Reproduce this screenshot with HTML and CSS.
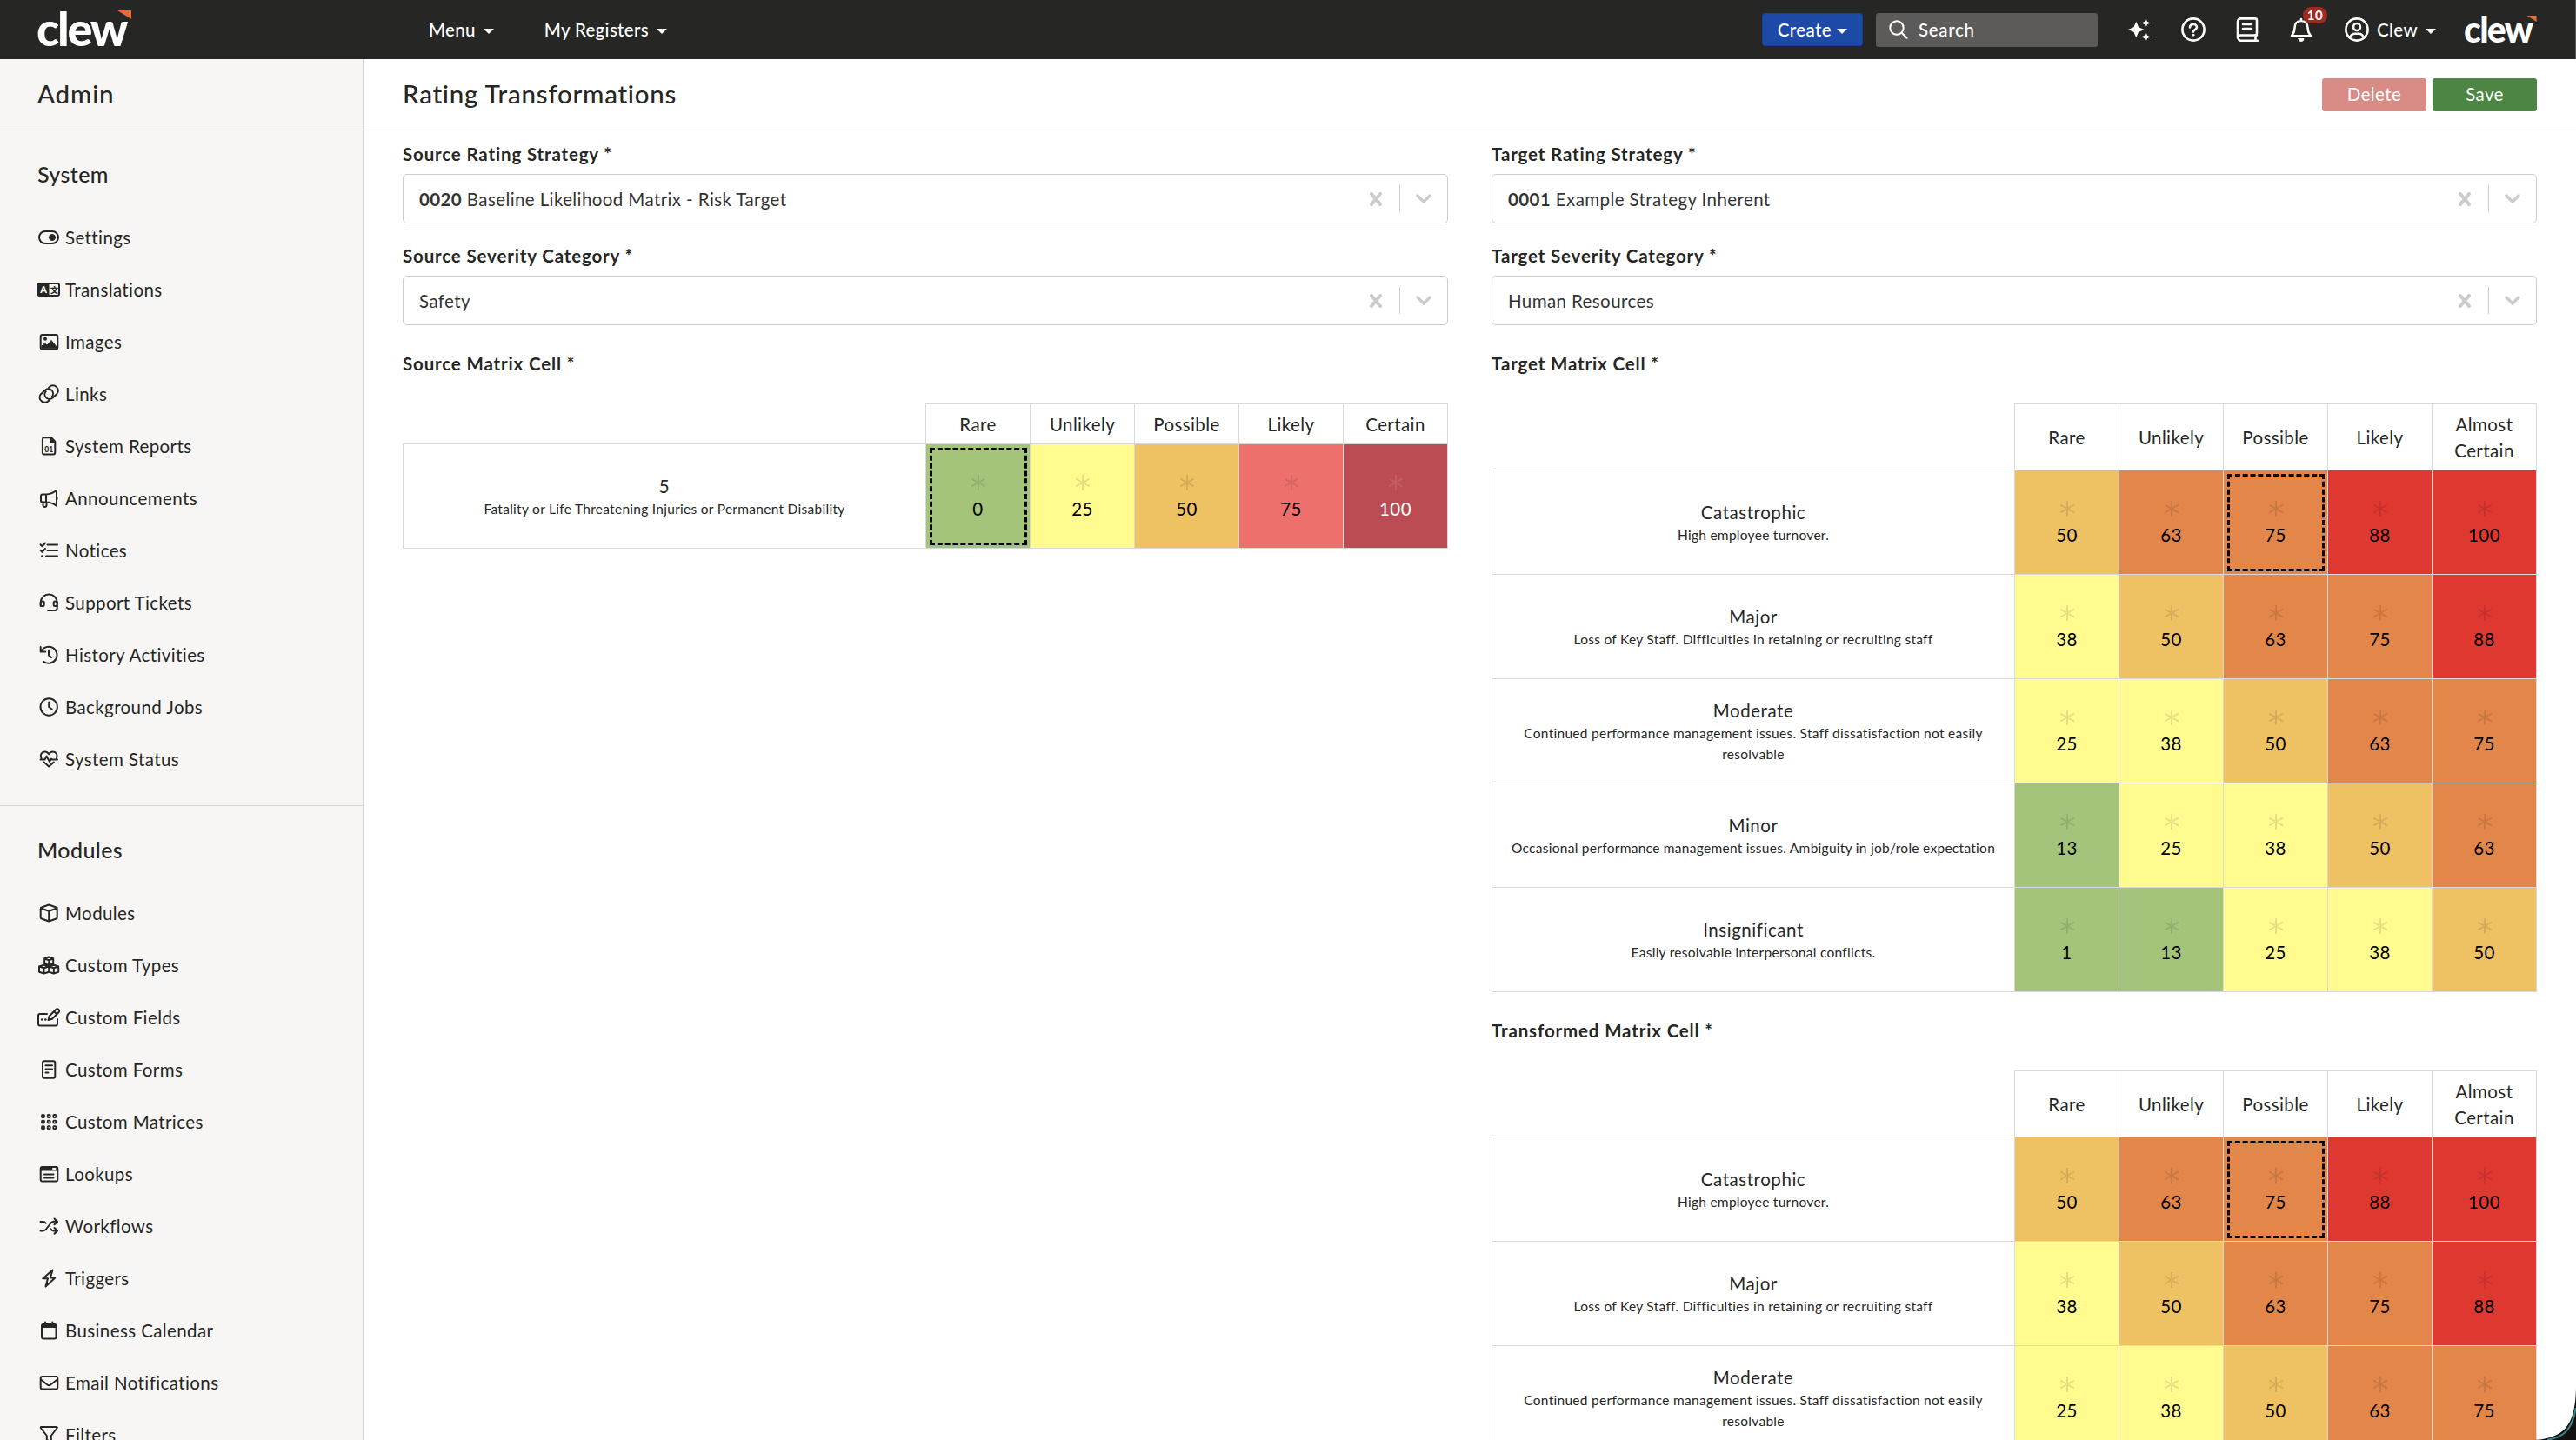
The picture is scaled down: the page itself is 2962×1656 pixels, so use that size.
FILE: index.html
```html
<!DOCTYPE html>
<html lang="en">
<head>
  <meta charset="UTF-8">
  <meta name="viewport" content="width=device-width, initial-scale=1.0">
  <title>Rating Transformations</title>
  <link rel="stylesheet" href="styles.css">
</head>
<body>
  <!-- Shared symbols -->
  <svg class="symbols">
    <symbol id="star" viewBox="0 0 18 18"><path d="M9 1v16M2 5l14 8M16 5L2 13"/></symbol>
    <symbol id="clear" viewBox="0 0 16 16"><path d="M3 2l10 12M13 2L3 14"/></symbol>
    <symbol id="chevron" viewBox="0 0 18 11"><path d="M2 2l7 7 7-7"/></symbol>
  </svg>

  <header class="topbar">
    <div class="logo">clew<svg class="logo-flag" viewBox="0 0 16 10"><path d="M0 0h16v10z"/></svg></div>
    <nav class="topnav">
      <a class="nav-link">Menu<i class="caret"></i></a>
      <a class="nav-link">My Registers<i class="caret"></i></a>
    </nav>
    <div class="tools">
      <button class="create">Create<i class="caret"></i></button>
      <div class="search">
        <svg viewBox="0 0 22 22"><circle cx="9" cy="9" r="7.7"/><path d="M14.7 14.7l6 6"/></svg>
        <span>Search</span>
      </div>
      <svg class="tool sparkles" viewBox="0 0 30 30"><path d="M11 5l3 7 7 3-7 3-3 7-3-7-7-3 7-3zM23 1l1.7 4.3L29 7l-4.3 1.7L23 13l-1.7-4.3L17 7l4.3-1.7zM23 18l1.7 4.3L29 24l-4.3 1.7L23 30l-1.7-4.3L17 24l4.3-1.7z"/></svg>
      <svg class="tool help" viewBox="0 0 28 28"><circle cx="14" cy="14" r="12.6"/><path d="M10 11.5c0-2 1.5-3.5 3.5-3.5h1c2 0 3.500 1.400 3.500 3.300 0 2.600-4 2.900-4 5.200"/><circle class="solid" cx="14" cy="20.2" r="1"/></svg>
      <svg class="tool book" viewBox="0 0 26 28"><path d="M24 20.500H5a3.200 3.200 0 0 0 0 6.200h20M22.500 21v5M2 23.500V5a3.600 3.600 0 0 1 3.600-3.600H22a2 2 0 0 1 2 2v15a2 2 0 0 1-2 2M8 8h10M8 13h10"/></svg>
      <div class="bell">
        <svg class="tool" viewBox="0 0 26 28"><path d="M13 2v2M13 4c-5 0-7.500 3.500-7.500 8 0 5-1.500 6.500-3.500 9.300h22c-2-2.800-3.500-4.300-3.500-9.300 0-4.500-2.500-8-7.500-8z"/><path class="solid" d="M10 24.500h6a3 3 0 0 1-6 0z"/></svg>
        <span class="badge">10</span>
      </div>
      <a class="user">
        <svg class="tool" viewBox="0 0 28 28"><circle cx="14" cy="14" r="12.6"/><circle cx="14" cy="11" r="4"/><path d="M6 23.500c1-3.500 3-4.700 6-4.700h4c3 0 5 1.200 6 4.700"/></svg>
        Clew<i class="caret"></i>
      </a>
      <div class="logo logo-small">clew<svg class="logo-flag" viewBox="0 0 16 10"><path d="M0 0h16v10z"/></svg></div>
    </div>
  </header>

  <div class="layout">
    <aside class="sidebar">
      <div class="sidebar-title">Admin</div>
      <section class="group">
        <h2>System</h2>
        <a class="item"><svg viewBox="0 0 26 24"><rect x="2" y="5" width="22" height="14" rx="7"/><circle class="solid" cx="17" cy="12" r="3.5"/></svg>Settings</a>
        <a class="item"><svg viewBox="0 0 26 24"><rect x="1" y="5" width="24" height="14" rx="2"/><path class="solid" d="M1 5h12v14H1z"/><text class="cut" x="3.2" y="15.8">A</text><text class="han" x="15" y="15.5">文</text></svg>Translations</a>
        <a class="item"><svg viewBox="0 0 26 24"><rect x="3.7" y="4" width="19.6" height="16.5" rx="2"/><circle class="fill" cx="9" cy="8.7" r="2"/><path class="solid" d="M5 19.500v-2.500l3.500-3 2.500 2 5-5.500 6.500 8v1z"/></svg>Images</a>
        <a class="item"><svg viewBox="0 0 26 24"><path d="M13.500 19.200l-1 1a5.400 5.400 0 0 1-7.800 0 5.400 5.400 0 0 1-1-7.700l5.500-5a5.400 5.400 0 0 1 7.600 7.600"/><path d="M13 5l1-1a5.400 5.400 0 0 1 7.800 0 5.400 5.400 0 0 1 .8 7.700l-5.300 5a5.400 5.400 0 0 1-7.600-7.600"/></svg>Links</a>
        <a class="item"><svg viewBox="0 0 26 24"><path d="M7.500 2.300h8.500l4.300 4.300v13a2 2 0 0 1-2 2H7.900a2 2 0 0 1-2-2V4.300a2 2 0 0 1 1.600-2z"/><path class="fill" d="M15 2v6h6z"/><text class="bits" x="8.3" y="18.5">01</text></svg>System Reports</a>
        <a class="item"><svg viewBox="0 0 26 24"><path d="M10 7.500H6a2 2 0 0 0-2 2v5a2 2 0 0 0 2 2h4zM10 7.500c5 0 8-1.500 12-4.700v18c-4-3-7-4.300-12-4.300M6.500 16.500V20a2 2 0 0 0 4 0v-3.500M22.500 11v2"/></svg>Announcements</a>
        <a class="item"><svg viewBox="0 0 26 24"><path d="M11.500 5.600h11.500M11.500 12h11.500M10 18.600h13M3.500 5.300l2 2L9 3.500M3.500 11.800l2 2L9 10"/><circle class="fill" cx="5.4" cy="18.6" r="1.3"/></svg>Notices</a>
        <a class="item"><svg viewBox="0 0 26 24"><path d="M3.700 16v-4a9.500 9.500 0 0 1 19 0v6.500a2.500 2.500 0 0 1-2.500 2.500H15"/><rect x="3.7" y="10.5" width="4" height="5.5" rx="1.5"/><rect x="18.7" y="10.5" width="4" height="5.5" rx="1.5"/><path class="solid" d="M12 20.500h3v1h-3z"/></svg>Support Tickets</a>
        <a class="item"><svg viewBox="0 0 26 24"><path d="M3.700 3v5.500h5.500M4.500 8A9.500 9.500 0 1 1 7.500 20M13 7.500v5l3 2.500"/></svg>History Activities</a>
        <a class="item"><svg viewBox="0 0 26 24"><circle cx="13.2" cy="12" r="9.7"/><path d="M13.200 6.500V12l3.500 2.500"/></svg>Background Jobs</a>
        <a class="item"><svg viewBox="0 0 26 24"><path d="M4.500 11.500C2.500 7 5 3.500 8.500 3.500c2.200 0 3.700 1.300 4.700 2.800 1-1.500 2.500-2.800 4.700-2.800 3.500 0 6 3.500 4 8M3.500 12.500h5l2-4 3.500 6.500 2-3.500 1 1H23M7.500 15.500l5.700 5 5.700-5"/></svg>System Status</a>
      </section>
      <section class="group">
        <h2>Modules</h2>
        <a class="item"><svg viewBox="0 0 26 24"><path d="M13.200 2.500l8.300 3a1.500 1.500 0 0 1 1.200 1.500v10a1.500 1.500 0 0 1-1.200 1.500l-8.300 3-8.300-3A1.500 1.500 0 0 1 3.700 17V7a1.500 1.500 0 0 1 1.200-1.500zM4 6.500l9.200 3.300 9.200-3.300M13.200 10v11.500"/></svg>Modules</a>
        <a class="item"><svg viewBox="0 0 26 24"><path d="M13.200 2.500l5 1.800v6l-5 1.700-5-1.700v-6zM8.200 4.500l5 1.700 5-1.700M13.200 6.500V12M7.500 11.700l5.700 1.800v6.200l-5.700 1.800L2 19.700v-6.200zM2 13.500l5.500 1.800 5.700-1.800 5.700 1.800 5.300-1.800M7.500 15.500v6M18.900 11.700l5.300 1.800v6.200l-5.300 1.800-5.700-1.800v-6.200zM18.900 15.500v6"/></svg>Custom Types</a>
        <a class="item"><svg viewBox="0 0 26 24"><path d="M11 8H3a2 2 0 0 0-2 2v9.500a2 2 0 0 0 2 2h18a2 2 0 0 0 2-2V14M12.500 15l1.200-4.500 7.500-7.500a2.200 2.200 0 0 1 3.200 3.200l-7.500 7.500zM19 5l3.300 3.300"/><circle class="fill" cx="5.2" cy="14.5" r="1.3"/><circle class="fill" cx="9.3" cy="14.5" r="1.3"/></svg>Custom Fields</a>
        <a class="item"><svg viewBox="0 0 26 24"><rect x="6" y="2.3" width="14.3" height="19.5" rx="2"/><path d="M9.500 7.300h7.500M9.500 11.500h7.500M9.500 15.500h3"/></svg>Custom Forms</a>
        <a class="item"><svg viewBox="0 0 26 24"><g class="dots"><rect x="5" y="4" width="3" height="3" rx=".8"/><rect x="11.7" y="4" width="3" height="3" rx=".8"/><rect x="18.3" y="4" width="3" height="3" rx=".8"/><rect x="5" y="10.6" width="3" height="3" rx=".8"/><rect x="11.7" y="10.6" width="3" height="3" rx=".8"/><rect x="18.3" y="10.6" width="3" height="3" rx=".8"/><rect x="5" y="17.2" width="3" height="3" rx=".8"/><rect x="11.7" y="17.2" width="3" height="3" rx=".8"/><rect x="18.3" y="17.2" width="3" height="3" rx=".8"/></g></svg>Custom Matrices</a>
        <a class="item"><svg viewBox="0 0 26 24"><rect x="3.7" y="4" width="19.6" height="16.5" rx="2"/><path class="solid" d="M4 4.500h19v3.500H4z"/><path d="M8 12.500h10.500M8 16.500h10.500"/><path class="light" d="M18 6h2.500"/></svg>Lookups</a>
        <a class="item"><svg viewBox="0 0 26 24"><path d="M3.500 7h3c1.500 0 2.500.7 3.300 1.800M3.500 17.500h3c1.500 0 2.500-.7 3.500-2l5.500-7c1-1.200 2-1.700 3.500-1.700h4M15 15.200c1.200 1.600 2.200 2.300 4 2.300h4M19.500 3.500l3.500 3.500-3.500 3.300M19.500 14l3.500 3.500-3.500 3.300"/></svg>Workflows</a>
        <a class="item"><svg viewBox="0 0 26 24"><path d="M17.500 2.500L6.300 12.300H12L9.500 21.500 20.300 11.500h-5.500z"/></svg>Triggers</a>
        <a class="item"><svg viewBox="0 0 26 24"><rect x="5" y="5" width="16.5" height="16.5" rx="2"/><path class="solid" d="M5.500 5h15.500v3.500H5.500z"/><path d="M9 2.500V5M17.300 2.500V5"/></svg>Business Calendar</a>
        <a class="item"><svg viewBox="0 0 26 24"><rect x="3.7" y="5" width="19.6" height="14.5" rx="2"/><path d="M4 8.500l7.500 6a3 3 0 0 0 3.600 0l7.700-6"/></svg>Email Notifications</a>
        <a class="item"><svg viewBox="0 0 26 24"><path d="M4 3h18.500l.3 1-7 9v8l-5-3.500V13L3.700 4z"/></svg>Filters</a>
      </section>
    </aside>

    <main class="main">
      <div class="page-head">
        <h1>Rating Transformations</h1>
        <div class="actions">
          <button class="btn btn-delete">Delete</button>
          <button class="btn btn-save">Save</button>
        </div>
      </div>

      <div class="columns">
        <div class="column">
          <label>Source Rating Strategy *</label>
          <div class="select">
            <div class="value"><b>0020</b> Baseline Likelihood Matrix - Risk Target</div>
            <svg class="clear"><use href="#clear"/></svg>
            <svg class="chevron"><use href="#chevron"/></svg>
          </div>
          <label>Source Severity Category *</label>
          <div class="select">
            <div class="value">Safety</div>
            <svg class="clear"><use href="#clear"/></svg>
            <svg class="chevron"><use href="#chevron"/></svg>
          </div>
          <label class="matrix-label">Source Matrix Cell *</label>
          <table class="matrix">
            <tr class="head"><td class="blank"></td><th>Rare</th><th>Unlikely</th><th>Possible</th><th>Likely</th><th>Certain</th></tr>
            <tr>
              <td class="severity">5<small>Fatality or Life Threatening Injuries or Permanent Disability</small></td>
              <td class="green"><div class="cell selected"><svg><use href="#star"/></svg>0</div></td>
              <td class="yellow"><div class="cell"><svg><use href="#star"/></svg>25</div></td>
              <td class="amber"><div class="cell"><svg><use href="#star"/></svg>50</div></td>
              <td class="salmon"><div class="cell"><svg><use href="#star"/></svg>75</div></td>
              <td class="crimson"><div class="cell"><svg><use href="#star"/></svg>100</div></td>
            </tr>
          </table>
        </div>

        <div class="column">
          <label>Target Rating Strategy *</label>
          <div class="select">
            <div class="value"><b>0001</b> Example Strategy Inherent</div>
            <svg class="clear"><use href="#clear"/></svg>
            <svg class="chevron"><use href="#chevron"/></svg>
          </div>
          <label>Target Severity Category *</label>
          <div class="select">
            <div class="value">Human Resources</div>
            <svg class="clear"><use href="#clear"/></svg>
            <svg class="chevron"><use href="#chevron"/></svg>
          </div>
          <label class="matrix-label">Target Matrix Cell *</label>
          <table class="matrix">
            <tr class="head tall"><td class="blank"></td><th>Rare</th><th>Unlikely</th><th>Possible</th><th>Likely</th><th>Almost Certain</th></tr>
            <tr>
              <td class="severity">Catastrophic<small>High employee turnover.</small></td>
              <td class="amber"><div class="cell"><svg><use href="#star"/></svg>50</div></td>
              <td class="orange"><div class="cell"><svg><use href="#star"/></svg>63</div></td>
              <td class="orange"><div class="cell selected"><svg><use href="#star"/></svg>75</div></td>
              <td class="red"><div class="cell"><svg><use href="#star"/></svg>88</div></td>
              <td class="red"><div class="cell"><svg><use href="#star"/></svg>100</div></td>
            </tr>
            <tr>
              <td class="severity">Major<small>Loss of Key Staff. Difficulties in retaining or recruiting staff</small></td>
              <td class="yellow"><div class="cell"><svg><use href="#star"/></svg>38</div></td>
              <td class="amber"><div class="cell"><svg><use href="#star"/></svg>50</div></td>
              <td class="orange"><div class="cell"><svg><use href="#star"/></svg>63</div></td>
              <td class="orange"><div class="cell"><svg><use href="#star"/></svg>75</div></td>
              <td class="red"><div class="cell"><svg><use href="#star"/></svg>88</div></td>
            </tr>
            <tr>
              <td class="severity">Moderate<small>Continued performance management issues. Staff dissatisfaction not easily<br>resolvable</small></td>
              <td class="yellow"><div class="cell"><svg><use href="#star"/></svg>25</div></td>
              <td class="yellow"><div class="cell"><svg><use href="#star"/></svg>38</div></td>
              <td class="amber"><div class="cell"><svg><use href="#star"/></svg>50</div></td>
              <td class="orange"><div class="cell"><svg><use href="#star"/></svg>63</div></td>
              <td class="orange"><div class="cell"><svg><use href="#star"/></svg>75</div></td>
            </tr>
            <tr>
              <td class="severity">Minor<small>Occasional performance management issues. Ambiguity in job/role expectation</small></td>
              <td class="green"><div class="cell"><svg><use href="#star"/></svg>13</div></td>
              <td class="yellow"><div class="cell"><svg><use href="#star"/></svg>25</div></td>
              <td class="yellow"><div class="cell"><svg><use href="#star"/></svg>38</div></td>
              <td class="amber"><div class="cell"><svg><use href="#star"/></svg>50</div></td>
              <td class="orange"><div class="cell"><svg><use href="#star"/></svg>63</div></td>
            </tr>
            <tr>
              <td class="severity">Insignificant<small>Easily resolvable interpersonal conflicts.</small></td>
              <td class="green"><div class="cell"><svg><use href="#star"/></svg>1</div></td>
              <td class="green"><div class="cell"><svg><use href="#star"/></svg>13</div></td>
              <td class="yellow"><div class="cell"><svg><use href="#star"/></svg>25</div></td>
              <td class="yellow"><div class="cell"><svg><use href="#star"/></svg>38</div></td>
              <td class="amber"><div class="cell"><svg><use href="#star"/></svg>50</div></td>
            </tr>
          </table>

          <label class="matrix-label">Transformed Matrix Cell *</label>
          <table class="matrix">
            <tr class="head tall"><td class="blank"></td><th>Rare</th><th>Unlikely</th><th>Possible</th><th>Likely</th><th>Almost Certain</th></tr>
            <tr>
              <td class="severity">Catastrophic<small>High employee turnover.</small></td>
              <td class="amber"><div class="cell"><svg><use href="#star"/></svg>50</div></td>
              <td class="orange"><div class="cell"><svg><use href="#star"/></svg>63</div></td>
              <td class="orange"><div class="cell selected"><svg><use href="#star"/></svg>75</div></td>
              <td class="red"><div class="cell"><svg><use href="#star"/></svg>88</div></td>
              <td class="red"><div class="cell"><svg><use href="#star"/></svg>100</div></td>
            </tr>
            <tr>
              <td class="severity">Major<small>Loss of Key Staff. Difficulties in retaining or recruiting staff</small></td>
              <td class="yellow"><div class="cell"><svg><use href="#star"/></svg>38</div></td>
              <td class="amber"><div class="cell"><svg><use href="#star"/></svg>50</div></td>
              <td class="orange"><div class="cell"><svg><use href="#star"/></svg>63</div></td>
              <td class="orange"><div class="cell"><svg><use href="#star"/></svg>75</div></td>
              <td class="red"><div class="cell"><svg><use href="#star"/></svg>88</div></td>
            </tr>
            <tr>
              <td class="severity">Moderate<small>Continued performance management issues. Staff dissatisfaction not easily<br>resolvable</small></td>
              <td class="yellow"><div class="cell"><svg><use href="#star"/></svg>25</div></td>
              <td class="yellow"><div class="cell"><svg><use href="#star"/></svg>38</div></td>
              <td class="amber"><div class="cell"><svg><use href="#star"/></svg>50</div></td>
              <td class="orange"><div class="cell"><svg><use href="#star"/></svg>63</div></td>
              <td class="orange"><div class="cell"><svg><use href="#star"/></svg>75</div></td>
            </tr>
          </table>
        </div>
      </div>
    </main>
  </div>

  <!-- Rounded window corner -->
  <svg class="corner" viewBox="0 0 48 60"><path d="M48 0C47 36 40 58 0 60h48z"/><path class="rim" d="M47.500 24C44 46 35 57 16 59.500"/></svg>
</body>
</html>
```

FILE: styles.css
```css
* {
  box-sizing: border-box;
}

body {
  margin: 0;
  height: 1656px;
  overflow: hidden;
  font-family: Lato, "Open Sans", sans-serif;
  font-size: 20.5px;
  line-height: 30px;
  letter-spacing: 0.4px;
  color: #262624;
  background: #fff;
}

svg {
  display: block;
  flex: none;
  fill: none;
  stroke: currentColor;
  stroke-width: 2;
  stroke-linecap: round;
  stroke-linejoin: round;
}

.symbols {
  position: absolute;
  width: 0;
  height: 0;
}

.solid {
  fill: currentColor;
  stroke-width: 1;
}

.fill {
  fill: currentColor;
  stroke: none;
}

button {
  border: 0;
  padding: 0;
  font: inherit;
  letter-spacing: inherit;
  color: #fff;
}

/* Top bar */
.topbar {
  display: flex;
  align-items: center;
  height: 68px;
  padding: 0 44px 0 42px;
  background: #262624;
  border-right: 1px solid #5b5a58;
  color: #fff;
  font-weight: 500;
}

.logo {
  position: relative;
  width: 110px;
  height: 68px;
  font-size: 54px;
  font-weight: 900;
  line-height: 65px;
  letter-spacing: -2.2px;
}

.logo-flag {
  position: absolute;
  top: 12px;
  right: 1px;
  width: 16px;
  height: 10px;
  fill: #e36c39;
  stroke: none;
}

.topnav {
  display: flex;
  gap: 58px;
  margin-left: 341px;
  line-height: 29px;
  letter-spacing: 0.3px;
}

.nav-link {
  display: flex;
  align-items: center;
}

.caret {
  margin: 3px 0 0 9px;
  border: 6px solid transparent;
  border-top-color: #fff;
  border-bottom: 0;
}

.tools {
  display: flex;
  align-items: center;
  margin-left: auto;
}

.create {
  display: flex;
  align-items: center;
  justify-content: center;
  width: 116px;
  height: 38px;
  margin-right: 15px;
  border: 1px solid #1a3f95;
  border-radius: 3px;
  background: #1d49a7;
}

.create .caret {
  margin-left: 6px;
}

.search {
  display: flex;
  align-items: center;
  gap: 12px;
  width: 255px;
  height: 39px;
  margin-right: 33px;
  padding-left: 15px;
  border-radius: 3px;
  background: #5c5b59;
  letter-spacing: 0.7px;
}

.search svg {
  width: 22px;
  height: 22px;
}

.tool {
  width: 28px;
  height: 28px;
  stroke-width: 2.6;
}

.sparkles {
  width: 30px;
  fill: #fff;
  stroke: none;
}

.help {
  margin-left: 33px;
}

.book {
  margin-left: 34px;
}

.bell {
  position: relative;
  margin-left: 34px;
}

.badge {
  position: absolute;
  left: 16px;
  top: -12px;
  width: 28px;
  height: 19px;
  border-radius: 9px;
  background: #9e2a22;
  font-size: 15px;
  font-weight: 700;
  line-height: 18px;
  text-align: center;
}

.user {
  display: flex;
  align-items: center;
  margin-left: 36px;
}

.user .tool {
  margin-right: 9px;
}

.logo-small {
  width: 84px;
  margin-left: 32px;
  font-size: 41px;
  line-height: 67px;
  letter-spacing: -1.7px;
}

.logo-small .logo-flag {
  top: 18px;
  right: 0;
  width: 12px;
  height: 7px;
}

.layout {
  display: flex;
  height: 1588px;
}

/* Sidebar */
.sidebar {
  width: 418px;
  flex: none;
  overflow: hidden;
  background: #f7f6f4;
  border-right: 1px solid #d5d5d5;
}

.sidebar-title {
  height: 82px;
  padding-left: 43px;
  border-bottom: 1px solid #d5d5d5;
  font-size: 29.5px;
  font-weight: 500;
  line-height: 79px;
  letter-spacing: 0.8px;
}

.group {
  padding-bottom: 23px;
  border-bottom: 1px solid #d5d5d5;
}

.group h2 {
  margin: 0;
  padding: 32px 0 25px 43px;
  font-size: 25px;
  font-weight: 500;
  line-height: 36px;
}

.item {
  display: flex;
  align-items: center;
  gap: 6px;
  height: 60px;
  padding-left: 43px;
}

.item svg {
  width: 26px;
  height: 24px;
}

.item text {
  fill: currentColor;
  stroke: none;
  font-size: 11px;
  font-weight: 900;
  letter-spacing: 0;
}

.item .cut {
  fill: #f7f6f4;
}

.item .han {
  font-family: "Noto Sans CJK SC", sans-serif;
  font-size: 9px;
}

.item .bits {
  font-size: 8.5px;
}

.dots {
  stroke-width: 1.8;
}

.light {
  stroke: #f7f6f4;
}

/* Page */
.main {
  flex: 1;
}

.page-head {
  display: flex;
  align-items: center;
  justify-content: space-between;
  height: 82px;
  padding: 0 45px;
  border-bottom: 1px solid #d5d5d5;
}

.page-head h1 {
  margin: 0 0 2px;
  font-size: 29.5px;
  font-weight: 500;
  line-height: 36px;
  letter-spacing: 0.75px;
}

.actions {
  display: flex;
  gap: 7px;
}

.btn {
  width: 120px;
  height: 38px;
  padding-bottom: 1px;
  border-radius: 3px;
}

.btn-delete {
  background: #d98b86;
}

.btn-save {
  background: #4c8544;
}

.columns {
  display: flex;
  gap: 50px;
  padding: 13px 45px 0;
}

.column {
  width: 1202px;
}

label {
  display: block;
  height: 37px;
  font-weight: 700;
  line-height: 29px;
  letter-spacing: 0.85px;
}

/* Select */
.select {
  display: flex;
  align-items: center;
  height: 57px;
  margin-bottom: 23px;
  padding: 0 18px;
  border: 1px solid #ccc;
  border-radius: 5px;
  color: #333;
}

.value {
  flex: 1;
}

.clear,
.chevron {
  color: #ccc;
  stroke-width: 3.4;
}

.clear {
  width: 16px;
  height: 16px;
  margin-right: 19px;
  stroke-width: 4;
}

.chevron {
  width: 37px;
  height: 31px;
  padding: 10px 0 10px 18px;
  border-left: 1px solid #ccc;
}

.matrix-label {
  height: 60px;
  margin-top: 30px;
}

/* Rating matrix */
.matrix {
  width: 1202px;
  table-layout: fixed;
  border-collapse: collapse;
}

.matrix td,
.matrix th {
  width: 120px;
  padding: 0;
  border: 1px solid #d9d9d9;
  font-weight: 400;
  text-align: center;
}

.matrix tr {
  height: 120px;
}

.matrix .head {
  height: 46px;
}

.matrix .tall {
  height: 76px;
}

.matrix th {
  padding: 0 20px;
  white-space: nowrap;
}

.tall th:last-child {
  white-space: normal;
}

.matrix .blank {
  width: auto;
  border-top: 0;
  border-left: 0;
}

.severity {
  letter-spacing: 0.55px;
}

small {
  display: block;
  font-size: 15.5px;
  line-height: 23.3px;
  letter-spacing: 0.28px;
}

.cell {
  width: 112px;
  height: 112px;
  margin: 0 auto;
  padding-top: 22px;
  border: 3px dashed transparent;
  color: #000;
}

.cell svg {
  width: 18px;
  height: 18px;
  margin: 6px auto;
  opacity: 0.1;
}

.selected {
  border-color: #000;
}

.green {
  background: #a4c47b;
}

.yellow {
  background: #fffb8f;
}

.amber {
  background: #eec163;
}

.orange {
  background: #e2864a;
}

.red {
  background: #de3831;
}

.salmon {
  background: #ee706c;
}

.crimson {
  background: #bc4c54;
}

.crimson .cell {
  color: #fff;
}

.corner {
  position: absolute;
  right: 0;
  bottom: 0;
  width: 48px;
  height: 60px;
  fill: #111;
  stroke: none;
}

.rim {
  fill: none;
  stroke: #3f8583;
  stroke-width: 2;
}
```
